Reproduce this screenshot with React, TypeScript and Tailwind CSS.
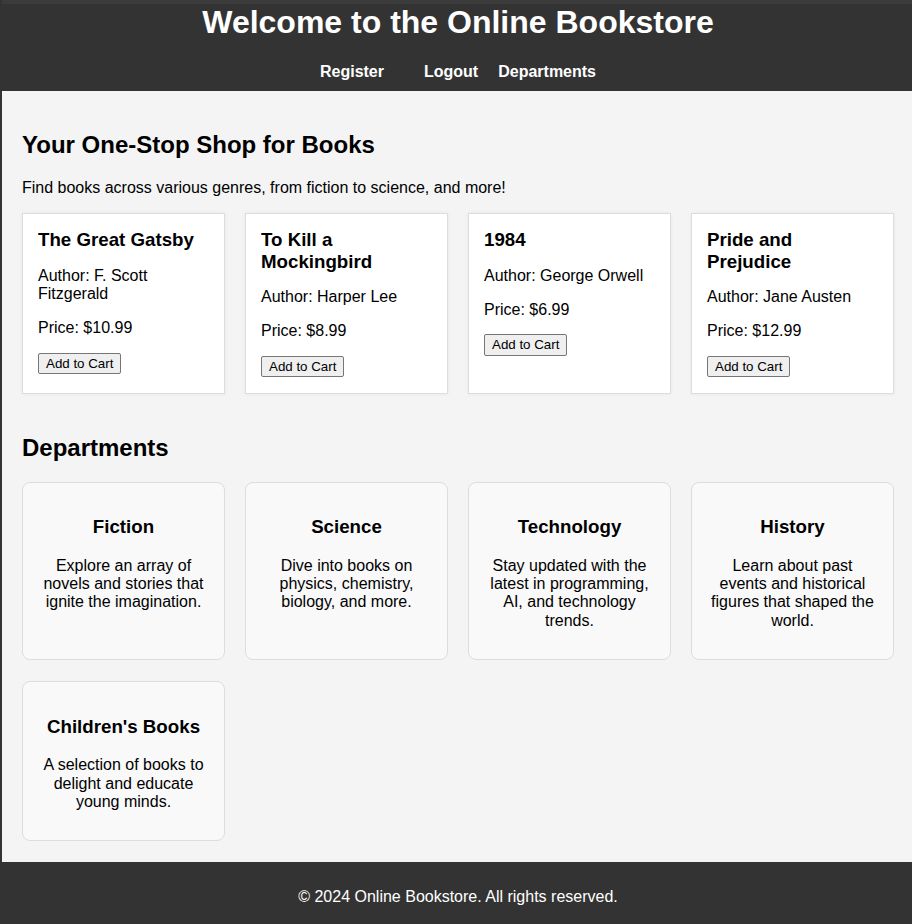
const books = [
  { title: "The Great Gatsby", author: "F. Scott Fitzgerald", price: "$10.99" },
  { title: "To Kill a Mockingbird", author: "Harper Lee", price: "$8.99" },
  { title: "1984", author: "George Orwell", price: "$6.99" },
  { title: "Pride and Prejudice", author: "Jane Austen", price: "$12.99" },
];

const departments = [
  { name: "Fiction", text: "Explore an array of novels and stories that ignite the imagination." },
  { name: "Science", text: "Dive into books on physics, chemistry, biology, and more." },
  { name: "Technology", text: "Stay updated with the latest in programming, AI, and technology trends." },
  { name: "History", text: "Learn about past events and historical figures that shaped the world." },
  { name: "Children's Books", text: "A selection of books to delight and educate young minds." },
];

const BookCard = ({ title, author, price }: { title: string; author: string; price: string }) => (
  <div className="border border-[#ddd] bg-white px-[15px] pb-[16px] pt-[15px] shadow-[0_0_4px_rgba(0,0,0,0.06)]">
    <h3 className="m-0 text-[18.72px] font-bold leading-[1.15]">{title}</h3>
    <p className="my-[16px]">Author: {author}</p>
    <p className="my-[16px]">Price: {price}</p>
    <button className="-mt-[1px] block rounded-[2px] border border-[#767676] bg-[#efefef] px-[7px] py-[2px] text-[13.33px] leading-[1.15] text-black">
      Add to Cart
    </button>
  </div>
);

const DeptCard = ({ name, text }: { name: string; text: string }) => (
  <div className="rounded-[8px] border border-[#ddd] bg-[#f9f9f9] px-[15px] pb-[13px] pt-[15px] text-center">
    <h3 className="my-[18.72px] text-[18.72px] font-bold leading-[1.15]">{name}</h3>
    <p className="my-[16px]">{text}</p>
  </div>
);

export default function App() {
  return (
    <div className="h-screen overflow-hidden bg-[#333] pl-[2px] font-['Liberation_Sans',Arial,sans-serif] text-[16px] leading-[1.15] text-black">
      <div className="flex h-full w-[912px] flex-col">
        <header className="box-border h-[91px] border-t-[4px] border-[#3b3b3b] bg-[#333] text-center text-white">
          <h1 className="text-[32px] font-bold leading-[37px]">Welcome to the Online Bookstore</h1>
          <nav className="mt-[12px] flex justify-center font-bold">
            <a className="mx-[10px] py-[10px]">Register</a>
            <a className="ml-[30px] mr-[10px] py-[10px]">Logout</a>
            <a className="mx-[10px] py-[10px]">Departments</a>
          </nav>
        </header>

        <main className="bg-[#f4f4f4] px-[20px] pb-[21px] pt-[20px]">
          <h2 className="mb-[20px] mt-[20px] text-[24px] font-bold leading-[1.15]">Your One-Stop Shop for Books</h2>
          <p className="mb-[16px]">Find books across various genres, from fiction to science, and more!</p>
          <div className="grid grid-cols-4 gap-[20px]">
            {books.map((b) => (
              <BookCard key={b.title} {...b} />
            ))}
          </div>

          <h2 className="mb-[20px] mt-[40px] text-[24px] font-bold leading-[1.15]">Departments</h2>
          <div className="grid grid-cols-4 gap-x-[20px] gap-y-[21px]">
            {departments.map((d) => (
              <DeptCard key={d.name} {...d} />
            ))}
          </div>
        </main>

        <footer className="flex-1 bg-[#333] pt-[26px] text-center text-white">
          <p>© 2024 Online Bookstore. All rights reserved.</p>
        </footer>
      </div>
    </div>
  );
}
